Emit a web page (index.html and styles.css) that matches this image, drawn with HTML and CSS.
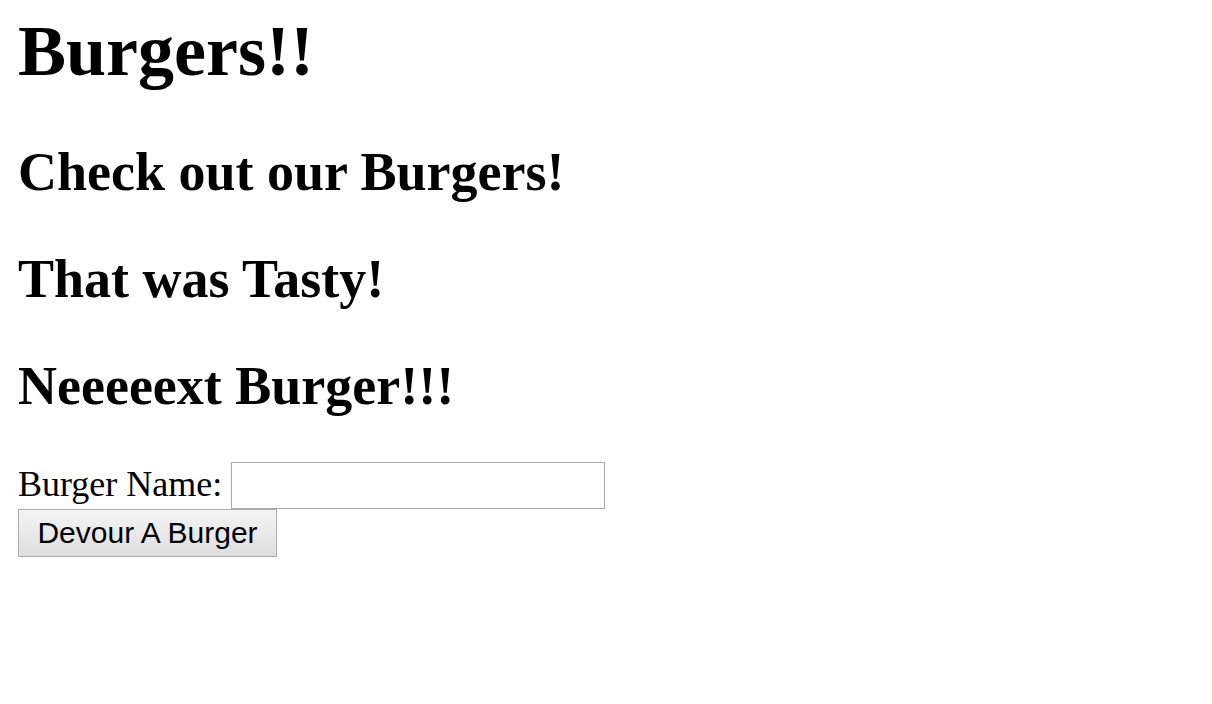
FILE: index.html
```html
<!DOCTYPE html>
<html>
<head>
<meta charset="utf-8">
<title>Burgers</title>
<link rel="stylesheet" href="styles.css">
</head>
<body>
<h1 class="title">Burgers!!</h1>
<h2 class="section">Check out our Burgers!</h2>
<h2 class="section">That was Tasty!</h2>
<h2 class="section">Neeeeext Burger!!!</h2>
<form class="burger-form">
  <div class="field-row">
    <label class="field-label" for="burger">Burger Name:</label>
    <input class="field-input" type="text" id="burger">
  </div>
  <button class="devour-btn" type="button">Devour A Burger</button>
</form>
</body>
</html>
```
FILE: styles.css
```css
html, body {
  background: #ffffff;
}
body {
  margin: 0;
  padding: 10px 18px;
  font-family: "Liberation Serif", "Times New Roman", serif;
  color: #000000;
}
.title {
  font-size: 72px;
  font-weight: bold;
  line-height: normal;
  margin: 0 0 48px;
}
.section {
  font-size: 54px;
  font-weight: bold;
  line-height: normal;
  margin: 45px 0;
}
.burger-form {
  display: flex;
  flex-direction: column;
  align-items: flex-start;
}
.field-row {
  display: flex;
  align-items: flex-start;
}
.field-label {
  font-size: 36px;
  line-height: normal;
  margin-top: 1px;
  margin-right: 9px;
}
.field-input {
  box-sizing: border-box;
  width: 374px;
  height: 47px;
  margin: 0;
  border: 1px solid #a9a9a9;
  padding: 2px 4px;
  font-family: "Liberation Sans", Arial, sans-serif;
  font-size: 30px;
  background: #ffffff;
}
.devour-btn {
  box-sizing: border-box;
  width: 259px;
  height: 48px;
  margin: 0;
  padding: 0;
  border: 1px solid #adadad;
  background: linear-gradient(#f4f4f4, #dedede);
  font-family: "Liberation Sans", Arial, sans-serif;
  font-size: 30px;
  color: #000000;
  text-align: center;
  line-height: normal;
}
```
